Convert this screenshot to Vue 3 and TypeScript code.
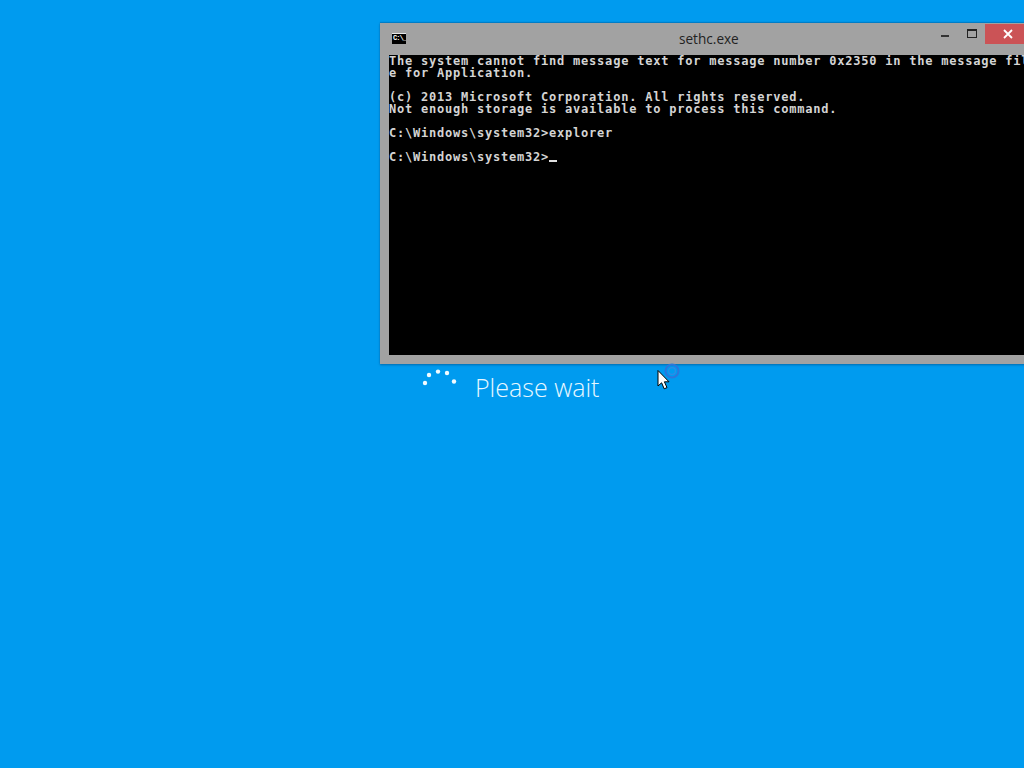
<script setup lang="ts">
const lines: string[] = [
  'The system cannot find message text for message number 0x2350 in the message fil',
  'e for Application.',
  '',
  '(c) 2013 Microsoft Corporation. All rights reserved.',
  'Not enough storage is available to process this command.',
  '',
  'C:\\Windows\\system32>explorer',
  '',
  'C:\\Windows\\system32>',
]
const dots = [
  { x: 4, y: 14, r: 2.2 },
  { x: 8, y: 6, r: 2.2 },
  { x: 17, y: 2.6, r: 2.2 },
  { x: 26, y: 4, r: 2.2 },
  { x: 33, y: 12.5, r: 2.2 },
]
</script>

<template>
  <div class="screen">
    <section class="window">
      <header class="titlebar">
        <div class="appicon"><span>C:\_</span></div>
        <div class="title">sethc.exe</div>
        <div class="min"></div>
        <div class="max"></div>
        <div class="close">
          <svg width="10" height="10" viewBox="0 0 10 10"><path d="M1 1L9 9M9 1L1 9" stroke="#fff" stroke-width="1.8" fill="none" /></svg>
        </div>
      </header>
      <div class="console">
        <div v-for="(line, i) in lines" :key="i" class="line">{{ line }}<span v-if="i === lines.length - 1" class="caret"></span></div>
      </div>
    </section>
    <div class="wait">
      <svg class="spinner" width="38" height="20" viewBox="0 0 38 20">
        <circle v-for="(d, i) in dots" :key="i" :cx="d.x" :cy="d.y" :r="d.r" fill="#f2fbff" />
      </svg>
      <span class="wait-text">Please wait</span>
    </div>
    <svg class="cursor" width="28" height="30" viewBox="0 0 28 30">
      <g fill="none">
        <circle cx="17" cy="8" r="6.5" stroke="#2a78dc" stroke-width="2.2" />
        <circle cx="17" cy="8" r="3.4" stroke="#2f8ce6" stroke-width="1.2" />
      </g>
      <path d="M3 7.5V23L6.6 19.8L9.2 25.8L12 24.6L9.4 18.8H14Z" fill="#fff" stroke="#000" stroke-width="1" />
    </svg>
  </div>
</template>

<style>
html, body { margin: 0; padding: 0; overflow: hidden; }
</style>

<style scoped>
.screen {
  position: relative;
  width: 1024px;
  height: 768px;
  overflow: hidden;
  background: #009bef;
}
.window {
  position: absolute;
  left: 380px;
  top: 23px;
  width: 660px;
  height: 341px;
  box-sizing: border-box;
  display: flex;
  flex-direction: column;
  background: #a2a2a2;
  box-shadow: 0 1px 2px rgba(0, 70, 120, .55), 0 -1px 1px rgba(0, 70, 120, .3);
  padding: 0 0 9px 9px;
}
.titlebar {
  position: relative;
  height: 32px;
  flex: none;
}
.appicon {
  position: absolute;
  left: 3px;
  top: 10px;
  width: 14px;
  height: 11px;
  background: #000;
  border-top: 1px solid #e8e8e8;
  box-sizing: border-box;
  overflow: hidden;
}
.appicon span {
  display: block;
  font: bold 7px/9px "Liberation Mono", monospace;
  letter-spacing: -1px;
  color: #fff;
  padding-left: 1px;
}
.title {
  position: absolute;
  left: 290px;
  top: 7px;
  font: 13.6px/18px "Open Sans", "Liberation Sans", sans-serif;
  color: #222;
}
.min {
  position: absolute;
  left: 552px;
  top: 12px;
  width: 8px;
  height: 2px;
  background: #333;
}
.max {
  position: absolute;
  left: 578px;
  top: 6px;
  width: 8px;
  height: 6px;
  border: 1px solid #222;
  border-top-width: 2px;
}
.close {
  position: absolute;
  left: 596px;
  top: 1px;
  width: 46px;
  height: 20px;
  background: #cb5356;
  display: flex;
  align-items: center;
  justify-content: center;
}
.console {
  flex: 1;
  background: #000;
  color: #d4d4d4;
  font: bold 12px/12px "DejaVu Sans Mono", "Liberation Mono", monospace;
  letter-spacing: 0.78px;
  white-space: pre;
  overflow: hidden;
}
.line {
  height: 12px;
}
.caret {
  display: inline-block;
  width: 8px;
  height: 2px;
  background: #e0e0e0;
  vertical-align: -1px;
}
.wait {
  position: absolute;
  left: 421px;
  top: 369px;
  display: flex;
  align-items: flex-start;
  gap: 16px;
}
.spinner {
  flex: none;
}
.wait-text {
  font: 300 25px/37px "Open Sans", "Liberation Sans", sans-serif;
  color: #e6f7ff;
  white-space: nowrap;
}
.cursor {
  position: absolute;
  left: 655px;
  top: 363px;
}
</style>
